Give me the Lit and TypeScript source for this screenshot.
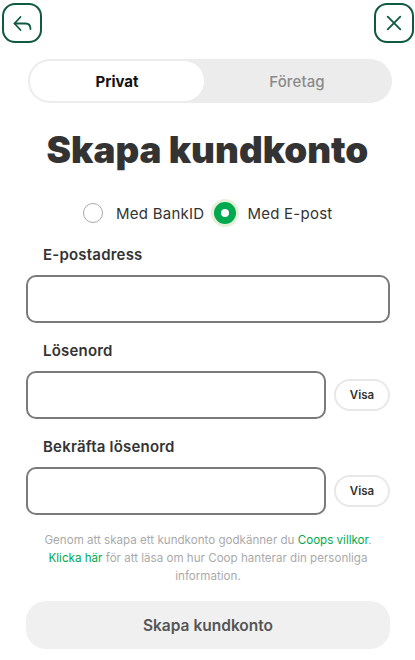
import { LitElement, html, css } from 'lit';
import { customElement } from 'lit/decorators.js';

@customElement('app-root')
export class AppRoot extends LitElement {
  static styles = css`
    :host {
      display: block;
      width: 415px;
      height: 660px;
      overflow: hidden;
      background: #fff;
      font-family: 'Inter', 'Liberation Sans', sans-serif;
      color: #333;
    }

    .top {
      display: flex;
      justify-content: space-between;
      padding: 3px 1px 0 2px;
    }

    .icon-btn {
      width: 40px;
      height: 40px;
      box-sizing: border-box;
      border: 2px solid #0f5a41;
      border-radius: 13px;
      background: #fff;
      padding: 0;
      display: flex;
      align-items: center;
      justify-content: center;
    }

    .tabs {
      display: flex;
      margin: 16px 23px 0 28px;
      height: 44px;
      box-sizing: border-box;
      padding: 2px;
      background: #ececec;
      border-radius: 22px;
    }

    .tab {
      flex: 0 0 174px;
      display: flex;
      align-items: center;
      justify-content: center;
      border-radius: 20px;
      font-size: 15px;
      font-weight: 700;
      color: #111;
    }

    .tab.on {
      background: #fff;
    }

    .tab.off {
      flex: 1;
      font-weight: 500;
      color: #8a8a8a;
      letter-spacing: 0.1px;
    }

    h1 {
      margin: 22px 0 0;
      font-size: 36.8px;
      line-height: 50px;
      font-weight: 900;
      text-align: center;
      color: #333;
    }

    .radios {
      display: flex;
      align-items: center;
      margin: 24px 0 0 83px;
      height: 28px;
      font-size: 15px;
      letter-spacing: 0.25px;
    }

    .radio {
      width: 20px;
      height: 20px;
      box-sizing: border-box;
      border: 1px solid #aaa;
      border-radius: 50%;
      margin-right: 13px;
    }

    .radio-on {
      width: 22px;
      height: 22px;
      box-sizing: border-box;
      border: 7.5px solid #00a94f;
      border-radius: 50%;
      background: #fff;
      box-shadow: 0 0 0 3px #e6f0d8;
      margin: 0 11px 0 10px;
    }

    .form {
      padding: 0 25px 0 26px;
    }

    label {
      display: block;
      margin: 0 0 10px 17px;
      font-size: 15px;
      line-height: 20px;
      font-weight: 600;
      color: #333;
      letter-spacing: 0.2px;
    }

    .first {
      margin-top: 18px;
    }

    .row {
      display: flex;
      align-items: center;
      gap: 8px;
      margin-bottom: 18px;
    }

    .field {
      flex: 1;
      height: 48px;
      box-sizing: border-box;
      border: 2px solid #7a7a7a;
      border-radius: 10px;
      background: #fff;
    }

    .show {
      flex: 0 0 56px;
      height: 32px;
      box-sizing: border-box;
      border: 2px solid #e8e8e8;
      border-radius: 16px;
      display: flex;
      align-items: center;
      justify-content: center;
      font-size: 11.5px;
      font-weight: 600;
      color: #333;
    }

    .terms {
      margin: -2px 0 0;
      font-size: 11.6px;
      line-height: 18px;
      color: #aaa;
      text-align: center;
    }

    .terms a {
      color: #00a94f;
      text-decoration: none;
    }

    .submit {
      margin-top: 16px;
      height: 48px;
      border-radius: 20px;
      background: #f0f0f0;
      display: flex;
      align-items: center;
      justify-content: center;
      font-size: 15.5px;
      font-weight: 600;
      color: #555;
    }
  `;

  render() {
    return html`
      <div class="top">
        <div class="icon-btn">
          <svg width="22" height="22" viewBox="0 0 22 22" fill="none" stroke="#0f5a41" stroke-width="1.8" stroke-linecap="round" stroke-linejoin="round">
            <path d="M9.5 5 3.5 11.5l6 6.5" />
            <path d="M3.5 11.5h11c3 0 5 2 5 5.5" />
          </svg>
        </div>
        <div class="icon-btn">
          <svg width="22" height="22" viewBox="0 0 22 22" fill="none" stroke="#0f5a41" stroke-width="1.8" stroke-linecap="round">
            <path d="M4.7 4.7l12.6 12.6M17.3 4.7 4.7 17.3" />
          </svg>
        </div>
      </div>
      <div class="tabs">
        <div class="tab on">Privat</div>
        <div class="tab off">Företag</div>
      </div>
      <h1>Skapa kundkonto</h1>
      <div class="radios">
        <span class="radio"></span>
        <span>Med BankID</span>
        <span class="radio-on"></span>
        <span>Med E-post</span>
      </div>
      <div class="form">
        <label class="first">E-postadress</label>
        <div class="row"><div class="field"></div></div>
        <label>Lösenord</label>
        <div class="row"><div class="field"></div><div class="show">Visa</div></div>
        <label>Bekräfta lösenord</label>
        <div class="row"><div class="field"></div><div class="show">Visa</div></div>
        <p class="terms">
          Genom att skapa ett kundkonto godkänner du <a>Coops villkor</a>.<br />
          <a>Klicka här</a> för att läsa om hur Coop hanterar din personliga<br />
          information.
        </p>
        <div class="submit">Skapa kundkonto</div>
      </div>
    `;
  }
}
